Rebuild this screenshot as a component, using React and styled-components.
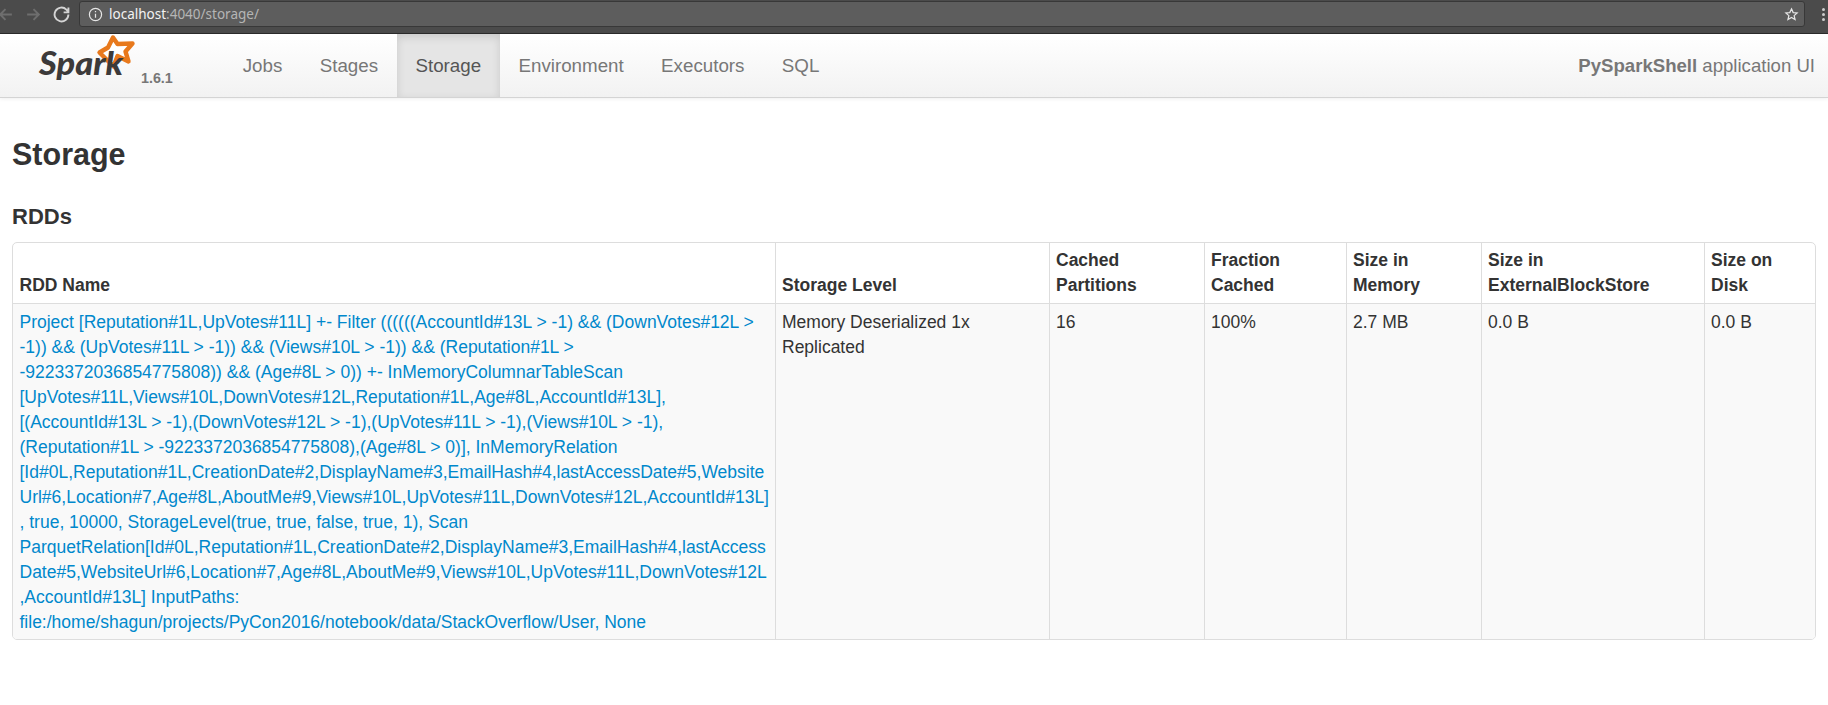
import React from "react";
import styled, { createGlobalStyle } from "styled-components";

const tabs = ["Jobs", "Stages", "Storage", "Environment", "Executors", "SQL"];

const columns = [
    { name: "RDD Name", width: 762 },
    { name: "Storage Level", width: 274 },
    { name: "Cached Partitions", width: 155 },
    { name: "Fraction Cached", width: 142 },
    { name: "Size in Memory", width: 135 },
    { name: "Size in ExternalBlockStore", width: 223 },
    { name: "Size on Disk", width: 112 },
];

const rddName = "Project [Reputation#1L,UpVotes#11L] +- Filter ((((((AccountId#13L > -1) && (DownVotes#12L > -1)) && (UpVotes#11L > -1)) && (Views#10L > -1)) && (Reputation#1L > -9223372036854775808)) && (Age#8L > 0)) +- InMemoryColumnarTableScan [UpVotes#11L,Views#10L,DownVotes#12L,Reputation#1L,Age#8L,AccountId#13L], [(AccountId#13L > -1),(DownVotes#12L > -1),(UpVotes#11L > -1),(Views#10L > -1),(Reputation#1L > -9223372036854775808),(Age#8L > 0)], InMemoryRelation [Id#0L,Reputation#1L,CreationDate#2,DisplayName#3,EmailHash#4,lastAccessDate#5,WebsiteUrl#6,Location#7,Age#8L,AboutMe#9,Views#10L,UpVotes#11L,DownVotes#12L,AccountId#13L], true, 10000, StorageLevel(true, true, false, true, 1), Scan ParquetRelation[Id#0L,Reputation#1L,CreationDate#2,DisplayName#3,EmailHash#4,lastAccessDate#5,WebsiteUrl#6,Location#7,Age#8L,AboutMe#9,Views#10L,UpVotes#11L,DownVotes#12L,AccountId#13L] InputPaths: file:/home/shagun/projects/PyCon2016/notebook/data/StackOverflow/User, None";

export default function App() {
    return (
        <>
            <GlobalStyle />
            <BrowserBar>
                <NavButtons>
                    <BrowserIcon viewBox="0 0 16 16" $dim>
                        <path d="M14 8H3M8 3L3 8l5 5" />
                    </BrowserIcon>
                    <BrowserIcon viewBox="0 0 16 16" $dim>
                        <path d="M2 8h11M8 3l5 5-5 5" />
                    </BrowserIcon>
                    <BrowserIcon viewBox="0 0 16 16">
                        <path d="M14.500 8a6.500 6.500 0 1 1-1.900-4.600L14.500 5.500M14.500 1.500v4.500H10" />
                    </BrowserIcon>
                </NavButtons>
                <AddressBox>
                    <InfoIcon viewBox="0 0 16 16">
                        <circle cx="8" cy="8" r="6.500" />
                        <path d="M8 7.200v4.300M8 4.200v1.500" />
                    </InfoIcon>
                    <AddressText><b>localhost</b>:4040/storage/</AddressText>
                    <StarIcon viewBox="0 0 16 16">
                        <path d="M8 2l1.800 4 4.200.4-3.200 2.800 1 4.200L8 11.200l-3.800 2.200 1-4.200L2 6.400 6.200 6z" />
                    </StarIcon>
                </AddressBox>
                <MenuDots><i /><i /><i /></MenuDots>
            </BrowserBar>
            <Navbar>
                <Brand>
                    <SparkLogo />
                    <Version>1.6.1</Version>
                </Brand>
                <Tabs>
                    {tabs.map(t => (
                        <Tab key={t} $active={t === "Storage"}>{t}</Tab>
                    ))}
                </Tabs>
                <AppName><b>PySparkShell</b> application UI</AppName>
            </Navbar>
            <Page>
                <Title>Storage</Title>
                <Subtitle>RDDs</Subtitle>
                <TableCard>
                    <Table>
                        <colgroup>
                            {columns.map(c => <col key={c.name} width={c.width} />)}
                        </colgroup>
                        <thead>
                            <tr>
                                {columns.map(c => <Head key={c.name}>{c.name}</Head>)}
                            </tr>
                        </thead>
                        <tbody>
                            <tr>
                                <Cell><RddLink>{rddName}</RddLink></Cell>
                                <Cell>Memory Deserialized 1x Replicated</Cell>
                                <Cell>16</Cell>
                                <Cell>100%</Cell>
                                <Cell>2.7 MB</Cell>
                                <Cell>0.0 B</Cell>
                                <Cell>0.0 B</Cell>
                            </tr>
                        </tbody>
                    </Table>
                </TableCard>
            </Page>
        </>
    );
}

function SparkLogo() {
    return (
        <LogoSvg viewBox="0 0 100 54">
            <path
                d="M77 3.500l4.500 6.500 15-.5-7 8 3 10-11-5.500-4 10.500-14-14 8.500-5z"
                fill="#fff"
                stroke="#e8791c"
                strokeWidth="4.400"
                strokeLinejoin="round"
            />
            <LogoWord x="3" y="41" textLength="84" lengthAdjust="spacingAndGlyphs">Spark</LogoWord>
        </LogoSvg>
    );
}

const GlobalStyle = createGlobalStyle`
html, body {
    margin: 0;
    padding: 0;
    background-color: #fff;
    font-family: "Liberation Sans", Arial, sans-serif;
    color: #333;
}
* {
    box-sizing: border-box;
}
`
const BrowserBar = styled.div`
height: 34px;
padding-bottom: 5px;
display: flex;
align-items: center;
background-color: #4b4b4b;
border-bottom: 1px solid #2b2b2b;
`
const NavButtons = styled.div`
width: 79px;
margin-left: -3px;
flex-shrink: 0;
display: flex;
gap: 11px;
`
const BrowserIcon = styled.svg`
width: 17px;
height: 17px;
fill: none;
stroke: ${p => (p.$dim ? "#6e6e6e" : "#d4d4d4")};
stroke-width: 1.8;
`
const AddressBox = styled.div`
width: 1726px;
height: 26px;
margin-left: 3px;
flex-shrink: 0;
display: flex;
align-items: center;
padding: 0 5px 0 8px;
background-color: #5d5d5d;
border: 1px solid #383838;
border-radius: 3px;
`
const InfoIcon = styled.svg`
width: 15px;
height: 15px;
fill: none;
stroke: #e6e6e6;
stroke-width: 1.300;
`
const StarIcon = styled.svg`
width: 15px;
height: 15px;
fill: none;
stroke: #e6e6e6;
stroke-width: 1.300;
margin-left: auto;
`
const AddressText = styled.span`
margin-left: 6px;
font-family: "Noto Sans", sans-serif;
font-size: 13.500px;
color: #b5b5b5;
b {
    font-weight: 400;
    color: #f2f2f2;
}
`
const MenuDots = styled.div`
display: flex;
flex-direction: column;
gap: 2px;
margin-left: 17px;
i {
    width: 3px;
    height: 3px;
    border-radius: 50%;
    background-color: #ccc;
}
`
const Navbar = styled.div`
height: 64px;
display: flex;
align-items: stretch;
background: linear-gradient(#fff, #f2f2f2);
border-bottom: 1px solid #d4d4d4;
box-shadow: 0 1px 4px rgba(0, 0, 0, 0.065);
`
const Brand = styled.div`
width: 224px;
padding-left: 36px;
display: flex;
align-items: flex-end;
`
const LogoSvg = styled.svg`
width: 100px;
height: 54px;
margin-bottom: 9px;
`
const LogoWord = styled.text`
font-family: "Lato", sans-serif;
font-style: italic;
font-weight: 900;
font-size: 32px;
fill: #3c3a3a;
`
const Version = styled.span`
margin-left: 5px;
margin-bottom: 11px;
font-size: 14.300px;
font-weight: 700;
color: #777;
`
const Tabs = styled.div`
display: flex;
`
const Tab = styled.div`
display: flex;
align-items: center;
padding: 0 18.700px;
font-size: 18.750px;
color: ${p => (p.$active ? "#555" : "#777")};
background-color: ${p => (p.$active ? "#e5e5e5" : "transparent")};
box-shadow: ${p => (p.$active ? "inset 0 3px 8px rgba(0, 0, 0, 0.125)" : "none")};
`
const AppName = styled.div`
margin-left: auto;
padding-right: 13px;
align-self: center;
font-size: 18.600px;
color: #777;
`
const Page = styled.div`
padding: 0 12px;
`
const Title = styled.h3`
margin: 36px 0 0;
font-size: 30.500px;
line-height: 40px;
font-weight: 700;
color: #333;
`
const Subtitle = styled.h4`
margin: 30px 0 0;
font-size: 22px;
line-height: 25px;
font-weight: 700;
color: #333;
`
const TableCard = styled.div`
margin-top: 13px;
border: 1px solid #ddd;
border-radius: 5px;
overflow: hidden;
`
const Table = styled.table`
width: 100%;
table-layout: fixed;
border-collapse: collapse;
font-size: 17.500px;
line-height: 25px;
`
const Head = styled.th`
padding: 4.500px 6.500px 5.500px;
text-align: left;
vertical-align: bottom;
font-weight: 700;
color: #333;
border-left: 1px solid #ddd;
border-bottom: 1px solid #ddd;
&:first-child {
    border-left: 0;
}
`
const Cell = styled.td`
padding: 6px 6.500px 4px;
vertical-align: top;
color: #333;
background-color: #f9f9f9;
border-left: 1px solid #ddd;
word-wrap: break-word;
&:first-child {
    border-left: 0;
    padding-right: 5.500px;
}
`
const RddLink = styled.a`
color: #0088cc;
`
